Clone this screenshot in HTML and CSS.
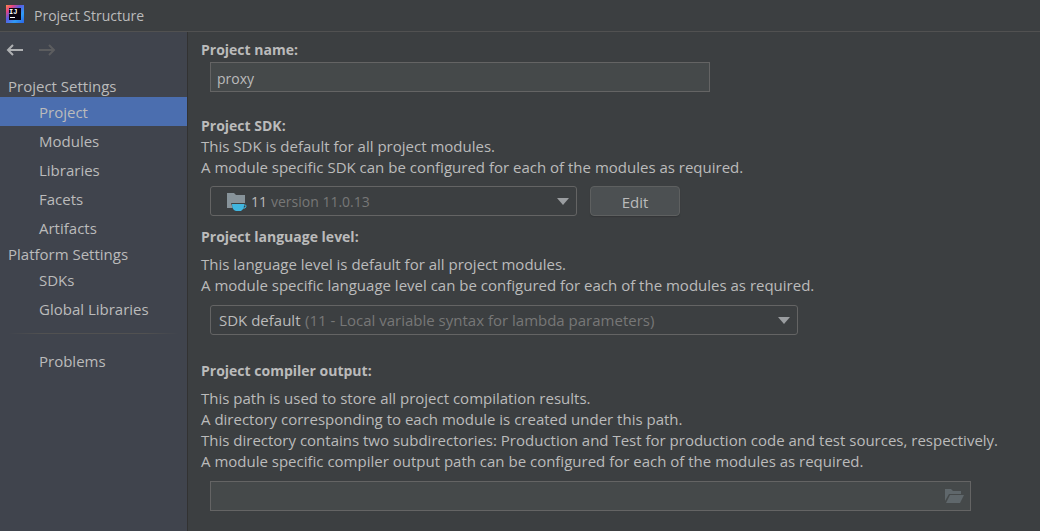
FILE: index.html
```html
<!DOCTYPE html>
<html lang="en">
<head>
    <meta charset="UTF-8">
    <meta name="viewport" content="width=device-width, initial-scale=1.0">
    <title>Project Structure</title>
    <link rel="stylesheet" href="styles.css">
</head>
<body>

<header class="titlebar">
    <svg class="logo" viewBox="0 0 18 18" aria-hidden="true">
        <defs>
            <linearGradient id="logoEdge" x1="0" y1="0" x2="1" y2="1">
                <stop offset="0" stop-color="#f9904a"/>
                <stop offset="0.2" stop-color="#e8457f"/>
                <stop offset="0.42" stop-color="#5b5be0"/>
                <stop offset="0.7" stop-color="#2f9cf5"/>
                <stop offset="1" stop-color="#2a62e8"/>
            </linearGradient>
        </defs>
        <rect width="18" height="18" fill="url(#logoEdge)"/>
        <rect x="3" y="3" width="12" height="12" fill="#0b0410"/>
        <text x="3" y="9">IJ</text>
        <rect x="4" y="12" width="5" height="1" fill="#fff"/>
    </svg>
    <h1>Project Structure</h1>
</header>

<div class="window">
    <aside class="sidebar">
        <div class="history">
            <button type="button" aria-label="Back">
                <svg viewBox="0 0 18 14"><path d="M17 7H2M7 2L2 7L7 12"/></svg>
            </button>
            <button type="button" aria-label="Forward" disabled>
                <svg viewBox="0 0 18 14"><path d="M0 7H15M10 2L15 7L10 12"/></svg>
            </button>
        </div>

        <nav>
            <h2>Project Settings</h2>
            <a href="#project" class="active">Project</a>
            <a href="#modules">Modules</a>
            <a href="#libraries">Libraries</a>
            <a href="#facets">Facets</a>
            <a href="#artifacts">Artifacts</a>
            <h2>Platform Settings</h2>
            <a href="#sdks">SDKs</a>
            <a href="#global-libraries">Global Libraries</a>
            <hr>
            <a href="#problems">Problems</a>
        </nav>
    </aside>

    <main class="content">
        <section class="group">
            <label class="heading" for="projectName">Project name:</label>
            <input class="field name-field" type="text" id="projectName" value="proxy">
        </section>

        <section class="group">
            <label class="heading" for="projectSdk">Project SDK:</label>
            <p>This SDK is default for all project modules.</p>
            <p>A module specific SDK can be configured for each of the modules as required.</p>
            <div class="row">
                <div class="combo sdk-combo">
                    <select id="projectSdk">
                        <option>11</option>
                    </select>
                    <svg class="sdk-icon" viewBox="0 0 20 18" aria-hidden="true">
                        <path d="M0 0h7l2 2h9v13H0z" fill="#87939a"/>
                        <path d="M4 10h15v8H8q-3-3-4-8z" fill="#3c3f41"/>
                        <path d="M5 11h12v2q0 3-3 5H9Q5 17 5 11z" fill="#40b6e0"/>
                        <path d="M16 12h2q1 0 1 1t-1 2h-2" fill="none" stroke="#40b6e0"/>
                    </svg>
                    <span class="detail">version 11.0.13</span>
                    <svg class="arrow" viewBox="0 0 12 7" aria-hidden="true"><path d="M0 0h12L6 7z"/></svg>
                </div>
                <button type="button" class="edit">Edit</button>
            </div>
        </section>

        <section class="group">
            <label class="heading spaced" for="languageLevel">Project language level:</label>
            <p>This language level is default for all project modules.</p>
            <p>A module specific language level can be configured for each of the modules as required.</p>
            <div class="row level-row">
                <div class="combo level-combo">
                    <select id="languageLevel">
                        <option>SDK default</option>
                    </select>
                    <span class="detail">(11 - Local variable syntax for lambda parameters)</span>
                    <svg class="arrow" viewBox="0 0 12 7" aria-hidden="true"><path d="M0 0h12L6 7z"/></svg>
                </div>
            </div>
        </section>

        <section class="group">
            <label class="heading spaced" for="compilerOutput">Project compiler output:</label>
            <p>This path is used to store all project compilation results.</p>
            <p>A directory corresponding to each module is created under this path.</p>
            <p>This directory contains two subdirectories: Production and Test for production code and test sources, respectively.</p>
            <p>A module specific compiler output path can be configured for each of the modules as required.</p>
            <div class="field path-field">
                <input type="text" id="compilerOutput">
                <button type="button" aria-label="Browse">
                    <svg viewBox="0 0 20 16"><path d="M1 13V1h6l2 2h8v3H5z"/><path d="M6 7h14l-4 8H2z"/></svg>
                </button>
            </div>
        </section>
    </main>
</div>

</body>
</html>
```
FILE: styles.css
```css
* {
    margin: 0;
    padding: 0;
    box-sizing: border-box;
}

body {
    display: flex;
    flex-direction: column;
    min-height: 100vh;
    background-color: #3c3f41;
    color: #bbbbbb;
    font-family: 'Open Sans', 'Noto Sans', sans-serif;
    font-size: 15px;
    line-height: 21px;
}

button, input, select {
    font: inherit;
    color: inherit;
}

.titlebar {
    display: flex;
    align-items: center;
    gap: 10px;
    height: 32px;
    padding: 0 6px 3px;
    border-bottom: 1px solid #515151;
}

.titlebar h1 {
    padding-top: 3px;
    font-size: 14px;
    font-weight: 400;
}

.logo {
    width: 18px;
    height: 18px;
}

.logo text {
    fill: #ffffff;
    font-family: 'Liberation Mono', monospace;
    font-size: 7px;
    font-weight: 700;
}

.window {
    display: flex;
    flex: 1;
}

/* Sidebar */
.sidebar {
    flex: none;
    width: 188px;
    background-color: #40444d;
    border-right: 1px solid #323232;
}

.history {
    display: flex;
    gap: 15px;
    height: 41px;
    padding: 11px 6px;
}

.history button {
    display: flex;
    width: 18px;
    height: 14px;
    background: none;
    border: none;
}

.history svg {
    width: 18px;
    height: 14px;
    fill: none;
    stroke: #afb1b3;
    stroke-width: 2;
}

.history button:disabled svg {
    stroke: #5c5d5f;
}

.sidebar h2 {
    padding: 3px 8px 0;
    font-size: 15px;
    font-weight: 400;
}

.sidebar a {
    display: block;
    padding: 5px 8px 3px 39px;
    color: inherit;
    text-decoration: none;
}

.sidebar a + h2 {
    padding-top: 2px;
}

.sidebar a.active {
    background-color: #4b6eaf;
}

.sidebar hr {
    height: 1px;
    margin: 10px 8px 12px;
    border: none;
    background: linear-gradient(to right, transparent, #515151 20%, #515151 80%, transparent);
}

/* Project page */
.content {
    flex: 1;
    display: flex;
    flex-direction: column;
    padding: 7px 24px 20px 13px;
}

.heading {
    display: block;
    font-size: 14px;
    font-weight: 700;
}

.heading.spaced {
    margin-bottom: 7px;
}

.field {
    display: flex;
    height: 30px;
    margin-left: 9px;
    background-color: #45494a;
    border: 1px solid #646464;
}

.name-field {
    width: 100%;
    max-width: 500px;
    margin-top: 2px;
    margin-bottom: 23px;
    padding: 2px 6px 0;
    font-size: 14px;
}

.row {
    display: flex;
    gap: 13px;
    margin: 8px 0 10px 9px;
}

.level-row {
    margin-top: 9px;
    margin-bottom: 25px;
}

.combo {
    position: relative;
    width: 100%;
}

.sdk-combo {
    max-width: 367px;
    font-size: 14px;
}

.level-combo {
    max-width: 588px;
}

.combo select {
    display: block;
    width: 100%;
    height: 30px;
    padding: 0 30px 0 8px;
    appearance: none;
    background-color: #3c3f41;
    border: 1px solid #646464;
    border-radius: 3px;
}

.sdk-combo select {
    padding-left: 40px;
}

.combo svg,
.detail {
    position: absolute;
    pointer-events: none;
}

.sdk-icon {
    left: 17px;
    top: 7px;
    width: 20px;
    height: 18px;
}

.detail {
    top: 5px;
    color: #777777;
}

.sdk-combo .detail {
    left: 61px;
}

.level-combo .detail {
    left: 95px;
}

.arrow {
    right: 8px;
    top: 12px;
    width: 12px;
    height: 7px;
    fill: #9a9da0;
}

.edit {
    flex: none;
    width: 90px;
    height: 30px;
    padding-top: 3px;
    background-color: #4c5052;
    border: 1px solid #5e6060;
    border-radius: 4px;
    box-shadow: 0 1px 1px #333638;
}

.path-field {
    margin-top: 9px;
    margin-right: 45px;
}

.path-field input {
    flex: 1;
    min-width: 0;
    padding: 2px 7px 0;
    background: none;
    border: none;
    outline: none;
}

.path-field button {
    display: flex;
    align-items: center;
    padding: 0 6px;
    background: none;
    border: none;
}

.path-field svg {
    width: 20px;
    height: 16px;
    fill: #5f676b;
}
```
